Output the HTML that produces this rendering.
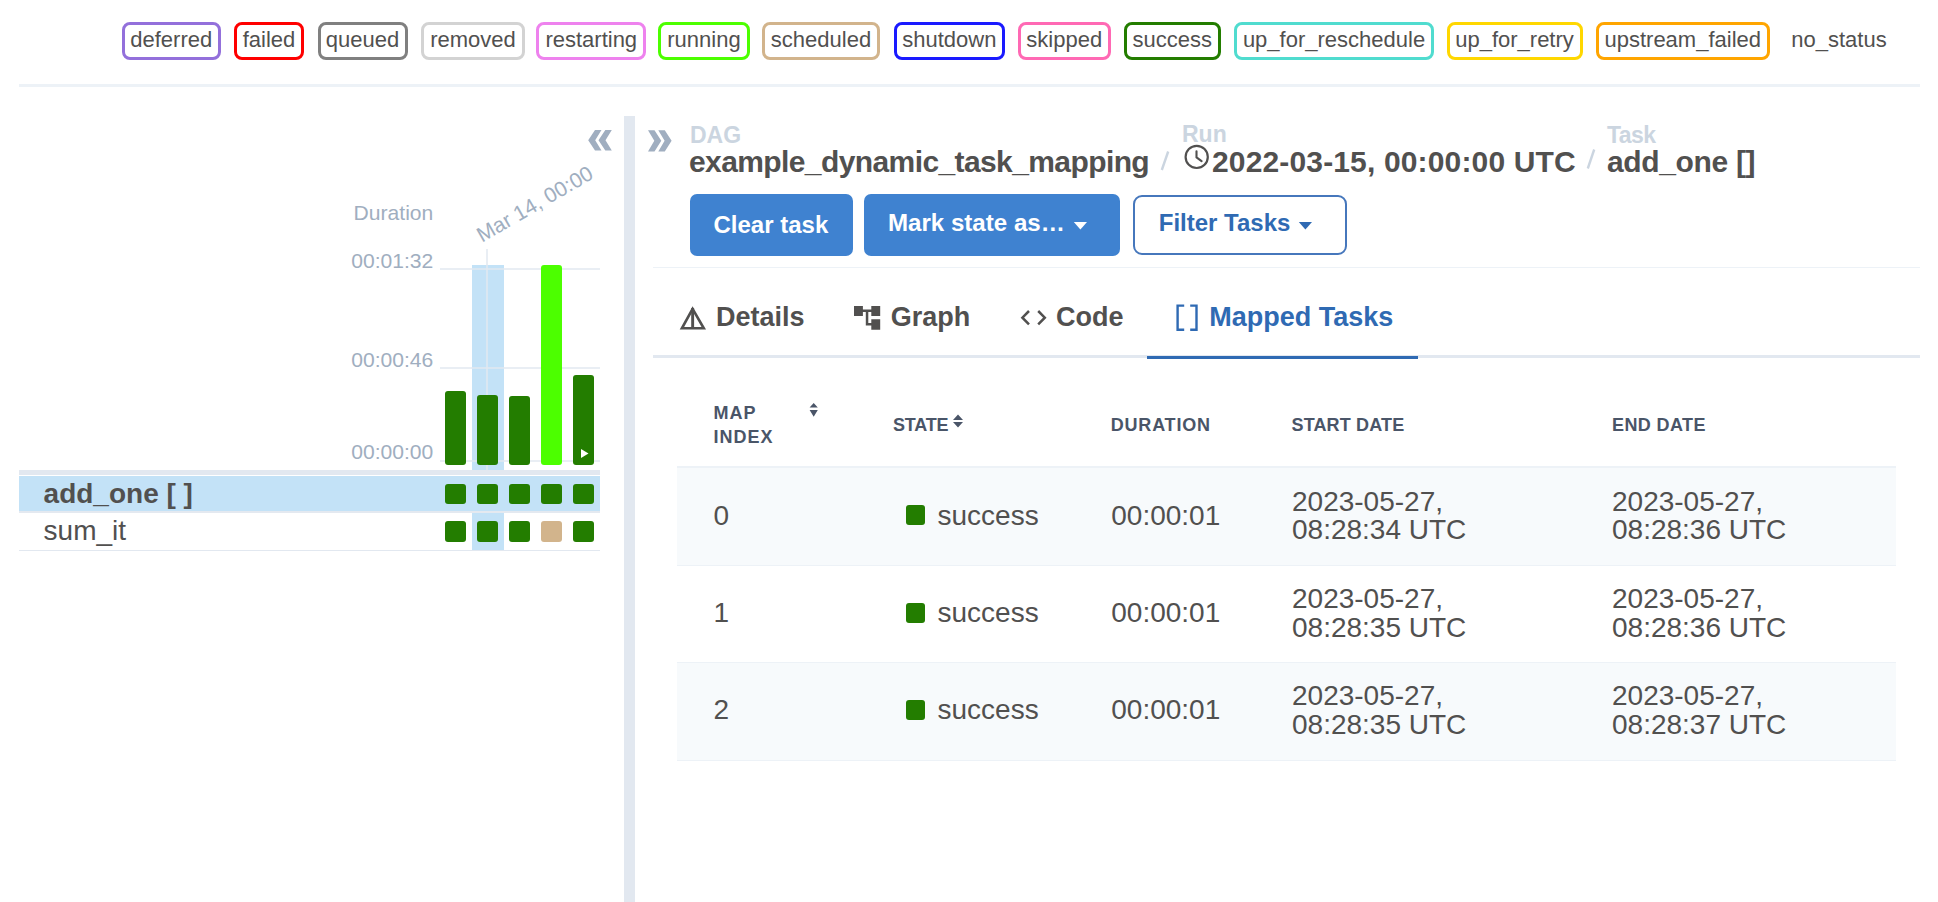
<!DOCTYPE html>
<html><head><meta charset="utf-8"><title>Grid</title>
<style>
html,body{margin:0;padding:0;background:#fff;width:1938px;height:902px;overflow:hidden;position:relative}
body{font-family:"Liberation Sans",sans-serif;color:#51504f}
.t{position:absolute;white-space:pre}
.r{position:absolute;display:block}
.badge{position:absolute;top:21.75px;height:38.5px;box-sizing:border-box;border:3px solid;border-radius:8px;font-size:22px;line-height:30.5px;text-align:center;color:#51504f;white-space:pre}
.btn{position:absolute;background:#3f82d0;border-radius:7px}
</style></head><body>
<div class="badge" style="left:121.75px;width:99.0px;border-color:#9370db">deferred</div>
<div class="badge" style="left:234.25px;width:69.5px;border-color:#ff0000">failed</div>
<div class="badge" style="left:317.5px;width:90.0px;border-color:#808080">queued</div>
<div class="badge" style="left:421px;width:104px;border-color:#d3d3d3">removed</div>
<div class="badge" style="left:536.25px;width:110.0px;border-color:#ee82ee">restarting</div>
<div class="badge" style="left:658px;width:92px;border-color:#4cff00">running</div>
<div class="badge" style="left:762px;width:118px;border-color:#d2b48c">scheduled</div>
<div class="badge" style="left:893.75px;width:111.25px;border-color:#1a1aff">shutdown</div>
<div class="badge" style="left:1017.5px;width:93.5px;border-color:#ff69b4">skipped</div>
<div class="badge" style="left:1124px;width:96.5px;border-color:#237d00">success</div>
<div class="badge" style="left:1234px;width:200px;border-color:#50dccf">up_for_reschedule</div>
<div class="badge" style="left:1446.5px;width:136.0px;border-color:#ffd700">up_for_retry</div>
<div class="badge" style="left:1595.5px;width:174.5px;border-color:#ffa500">upstream_failed</div>
<div class="t" style="left:1791.30px;top:29.17px;font-size:22px;line-height:22px;font-weight:400;color:#51504f;">no_status</div>
<div class="r" style="left:19.00px;top:84.00px;width:1901.00px;height:3.00px;background:#edf2f7;"></div>
<svg class="r" style="left:586px;top:129px" width="27" height="23" viewBox="0 0 27 23"><path d="M9 1 H15.5 L9.2 11.3 L15.5 21.6 H9 L2.2 11.3 Z M19.3 1 H25.8 L19.5 11.3 L25.8 21.6 H19.3 L12.5 11.3 Z" fill="#a0aec0"/></svg>
<div class="t" style="right:1504.70px;top:202.13px;font-size:21.1px;line-height:21.1px;font-weight:400;color:#a0aec0;text-align:right">Duration</div>
<div class="t" style="right:1504.70px;top:250.13px;font-size:21.1px;line-height:21.1px;font-weight:400;color:#a0aec0;text-align:right">00:01:32</div>
<div class="t" style="right:1504.70px;top:349.13px;font-size:21.1px;line-height:21.1px;font-weight:400;color:#a0aec0;text-align:right">00:00:46</div>
<div class="t" style="right:1504.70px;top:441.13px;font-size:21.1px;line-height:21.1px;font-weight:400;color:#a0aec0;text-align:right">00:00:00</div>
<div class="r" style="left:472.00px;top:265.00px;width:32.00px;height:205.00px;background:#c3e2f7;"></div>
<div class="r" style="left:440.00px;top:268.00px;width:160.00px;height:2.00px;background:rgba(226,232,240,0.75);"></div>
<div class="r" style="left:440.00px;top:367.00px;width:160.00px;height:2.00px;background:rgba(226,232,240,0.75);"></div>
<div class="r" style="left:440.00px;top:460.00px;width:160.00px;height:2.00px;background:rgba(226,232,240,0.75);"></div>
<div class="r" style="left:486.00px;top:249.00px;width:2.00px;height:221.00px;background:rgba(226,232,240,0.75);"></div>
<div class="r" style="left:444.60px;top:391.30px;width:21.00px;height:73.70px;background:#237d00;border-radius:3px"></div>
<div class="r" style="left:477.00px;top:394.50px;width:21.00px;height:70.50px;background:#237d00;border-radius:3px"></div>
<div class="r" style="left:509.00px;top:396.10px;width:21.00px;height:68.90px;background:#237d00;border-radius:3px"></div>
<div class="r" style="left:540.70px;top:265.00px;width:21.00px;height:200.00px;background:#4cff00;border-radius:3px"></div>
<div class="r" style="left:573.00px;top:375.20px;width:21.00px;height:89.80px;background:#237d00;border-radius:3px"></div>
<svg class="r" style="left:580px;top:448px" width="10" height="11" viewBox="0 0 10 11"><path d="M1 1 L8.5 5.5 L1 10 Z" fill="#fff"/></svg>
<div class="t" style="left:480.8px;top:240.6px;font-size:21.1px;line-height:21.1px;color:#a0aec0;transform-origin:0 0;transform:rotate(-30deg) translateY(-16px)">Mar 14, 00:00</div>
<div class="r" style="left:19.00px;top:470.00px;width:581.00px;height:5.00px;background:#e2e8f0;"></div>
<div class="r" style="left:19.00px;top:476.00px;width:581.00px;height:35.00px;background:#c3e2f7;"></div>
<div class="r" style="left:19.00px;top:511.00px;width:581.00px;height:1.50px;background:#e4e9f0;"></div>
<div class="r" style="left:472.00px;top:513.00px;width:32.00px;height:37.00px;background:#c3e2f7;"></div>
<div class="r" style="left:19.00px;top:550.00px;width:581.00px;height:1.20px;background:#e2e8f0;"></div>
<div class="r" style="left:444.60px;top:484.00px;width:21.00px;height:20.00px;background:#237d00;border-radius:3px"></div>
<div class="r" style="left:477.00px;top:484.00px;width:21.00px;height:20.00px;background:#237d00;border-radius:3px"></div>
<div class="r" style="left:509.00px;top:484.00px;width:21.00px;height:20.00px;background:#237d00;border-radius:3px"></div>
<div class="r" style="left:540.70px;top:484.00px;width:21.00px;height:20.00px;background:#237d00;border-radius:3px"></div>
<div class="r" style="left:573.00px;top:484.00px;width:21.00px;height:20.00px;background:#237d00;border-radius:3px"></div>
<div class="r" style="left:444.60px;top:521.00px;width:21.00px;height:20.50px;background:#237d00;border-radius:3px"></div>
<div class="r" style="left:477.00px;top:521.00px;width:21.00px;height:20.50px;background:#237d00;border-radius:3px"></div>
<div class="r" style="left:509.00px;top:521.00px;width:21.00px;height:20.50px;background:#237d00;border-radius:3px"></div>
<div class="r" style="left:540.70px;top:521.00px;width:21.00px;height:20.50px;background:#d2b48c;border-radius:3px"></div>
<div class="r" style="left:573.00px;top:521.00px;width:21.00px;height:20.50px;background:#237d00;border-radius:3px"></div>
<div class="t" style="left:43.60px;top:479.59px;font-size:28px;line-height:28px;font-weight:700;color:#51504f;">add_one [ ]</div>
<div class="t" style="left:43.60px;top:516.69px;font-size:28px;line-height:28px;font-weight:400;color:#51504f;">sum_it</div>
<div class="r" style="left:624.00px;top:116.00px;width:11.00px;height:786.00px;background:#e2e8f0;"></div>
<svg class="r" style="left:646px;top:129px" width="27" height="24" viewBox="0 0 27 24"><path d="M2 1.2 H8.5 L15.3 11.8 L8.5 22.6 H2 L8.3 11.8 Z M12.3 1.2 H18.8 L25.6 11.8 L18.8 22.6 H12.3 L18.6 11.8 Z" fill="#a0aec0"/></svg>
<div class="t" style="left:690.00px;top:123.73px;font-size:23px;line-height:23px;font-weight:700;color:#cbd5e0;">DAG</div>
<div class="t" style="left:689.00px;top:146.60px;font-size:30px;line-height:30px;font-weight:700;color:#51504f;letter-spacing:-0.6px">example_dynamic_task_mapping</div>
<svg class="r" style="left:1155px;top:145px" width="20" height="32" viewBox="1155 145 20 32"><path d="M1168.2 151.5 L1161.8 170" stroke="#cbd5e0" stroke-width="2.4"/></svg>
<div class="t" style="left:1182.00px;top:123.28px;font-size:23px;line-height:23px;font-weight:700;color:#cbd5e0;">Run</div>
<svg class="r" style="left:1184px;top:143px" width="27" height="28" viewBox="0 -1 27 28"><circle cx="12.7" cy="12.9" r="11.1" fill="none" stroke="#51504f" stroke-width="2.2"/><path d="M12.5 7.2 V13.4 L17.6 17.1" fill="none" stroke="#51504f" stroke-width="2.1" stroke-linecap="round" stroke-linejoin="round"/></svg>
<div class="t" style="left:1212.00px;top:147.10px;font-size:30px;line-height:30px;font-weight:700;color:#51504f;letter-spacing:0.15px">2022-03-15, 00:00:00 UTC</div>
<svg class="r" style="left:1581px;top:143px" width="20" height="32" viewBox="1581 143 20 32"><path d="M1594.2 149.5 L1587.8 168.5" stroke="#cbd5e0" stroke-width="2.4"/></svg>
<div class="t" style="left:1607.00px;top:123.93px;font-size:23px;line-height:23px;font-weight:700;color:#cbd5e0;letter-spacing:-0.6px">Task</div>
<div class="t" style="left:1607.00px;top:147.10px;font-size:30px;line-height:30px;font-weight:700;color:#51504f;letter-spacing:-0.35px">add_one []</div>
<div class="btn" style="left:689.5px;top:194px;width:163.5px;height:61.5px"></div>
<div class="t" style="left:713.50px;top:212.68px;font-size:24px;line-height:24px;font-weight:700;color:#fff;">Clear task</div>
<div class="btn" style="left:864px;top:194px;width:256px;height:61.5px"></div>
<div class="t" style="left:888.00px;top:211.34px;font-size:24.1px;line-height:24.1px;font-weight:700;color:#fff;">Mark state as…</div>
<svg class="r" style="left:1073px;top:221px" width="15" height="10" viewBox="0 0 15 10"><path d="M0.8 1 H14 L7.4 8.5 Z" fill="#fff"/></svg>
<div class="r" style="left:1133px;top:195px;width:214px;height:60px;box-sizing:border-box;border:2px solid #4677bc;border-radius:9px"></div>
<div class="t" style="left:1158.75px;top:211.08px;font-size:24px;line-height:24px;font-weight:700;color:#2f6ab3;">Filter Tasks</div>
<svg class="r" style="left:1298px;top:221px" width="15" height="10" viewBox="0 0 15 10"><path d="M0.8 1 H14 L7.4 8.5 Z" fill="#2f6ab3"/></svg>
<div class="r" style="left:653.00px;top:266.80px;width:1267.00px;height:1.40px;background:#edf2f7;"></div>
<svg class="r" style="left:675px;top:300px" width="36" height="34" viewBox="675 300 36 34"><path d="M692.6 308.8 L681.9 328.3 H703.8 Z" fill="none" stroke="#51504f" stroke-width="2.6" stroke-linejoin="miter"/><rect x="691.2" y="308" width="2.9" height="20" fill="#51504f"/></svg>
<div class="t" style="left:716.00px;top:303.64px;font-size:27px;line-height:27px;font-weight:700;color:#51504f;">Details</div>
<svg class="r" style="left:848px;top:300px" width="40" height="35" viewBox="848 300 40 35"><path fill="#51504f" d="M854 306 H862.9 V316.1 H854 Z M871.3 306 H880.2 V316.1 H871.3 Z M871.3 319.2 H880.2 V329.7 H871.3 Z M862.5 309.6 H871.7 V312 H862.5 Z M865.8 309.6 H868.3 V325.6 H865.8 Z M865.8 322.9 H871.7 V325.5 H865.8 Z"/></svg>
<div class="t" style="left:890.75px;top:303.64px;font-size:27px;line-height:27px;font-weight:700;color:#51504f;">Graph</div>
<svg class="r" style="left:1015px;top:300px" width="40" height="35" viewBox="1015 300 40 35"><path d="M1029 311 L1022.4 317.7 L1029 324.4 M1038.2 311 L1044.8 317.7 L1038.2 324.4" fill="none" stroke="#51504f" stroke-width="2.5" stroke-linecap="butt"/></svg>
<div class="t" style="left:1056.00px;top:303.64px;font-size:27px;line-height:27px;font-weight:700;color:#51504f;">Code</div>
<svg class="r" style="left:1170px;top:300px" width="40" height="35" viewBox="1170 300 40 35"><path d="M1184.2 305.6 H1177.6 V329.8 H1184.2 M1190.2 305.6 H1196.5 V329.8 H1190.2" fill="none" stroke="#2f6ab3" stroke-width="2.4"/></svg>
<div class="t" style="left:1209.25px;top:303.64px;font-size:27px;line-height:27px;font-weight:700;color:#2f6ab3;">Mapped Tasks</div>
<div class="r" style="left:653.00px;top:355.00px;width:1267.00px;height:3.00px;background:#e2e8f0;"></div>
<div class="r" style="left:1147.00px;top:355.50px;width:271.00px;height:3.50px;background:#2f6ab3;"></div>
<div class="t" style="left:713.50px;top:403.76px;font-size:18px;line-height:18px;font-weight:700;color:#4a5568;letter-spacing:1px">MAP</div>
<div class="t" style="left:713.50px;top:427.76px;font-size:18px;line-height:18px;font-weight:700;color:#4a5568;letter-spacing:1px">INDEX</div>
<svg class="r" style="left:805px;top:400px" width="16" height="20" viewBox="805 400 16 20"><path d="M813.7 402.9 L817.8 407.6 H809.6 Z M809.6 410.1 H817.8 L813.7 416.8 Z" fill="#4a5568"/></svg>
<div class="t" style="left:893.00px;top:415.76px;font-size:18px;line-height:18px;font-weight:700;color:#4a5568;letter-spacing:-0.2px">STATE</div>
<svg class="r" style="left:950px;top:410px" width="16" height="20" viewBox="950 410 16 20"><path d="M958 414.5 L963 420 H953 Z M953 422 H963 L958 427.5 Z" fill="#4a5568"/></svg>
<div class="t" style="left:1110.75px;top:415.76px;font-size:18px;line-height:18px;font-weight:700;color:#4a5568;letter-spacing:0.8px">DURATION</div>
<div class="t" style="left:1291.50px;top:415.76px;font-size:18px;line-height:18px;font-weight:700;color:#4a5568;letter-spacing:0.15px">START DATE</div>
<div class="t" style="left:1612.00px;top:415.76px;font-size:18px;line-height:18px;font-weight:700;color:#4a5568;letter-spacing:0.4px">END DATE</div>
<div class="r" style="left:677.00px;top:466.50px;width:1219.00px;height:98.50px;background:#f7fafc;"></div>
<div class="r" style="left:677.00px;top:466.00px;width:1219.00px;height:1.50px;background:#edf2f7;"></div>
<div class="r" style="left:677.00px;top:565.00px;width:1219.00px;height:97.00px;background:#ffffff;"></div>
<div class="r" style="left:677.00px;top:564.50px;width:1219.00px;height:1.50px;background:#edf2f7;"></div>
<div class="r" style="left:677.00px;top:662.00px;width:1219.00px;height:98.00px;background:#f7fafc;"></div>
<div class="r" style="left:677.00px;top:661.50px;width:1219.00px;height:1.50px;background:#edf2f7;"></div>
<div class="r" style="left:677.00px;top:759.50px;width:1219.00px;height:1.50px;background:#edf2f7;"></div>
<div class="t" style="left:713.50px;top:501.54px;font-size:28px;line-height:28px;font-weight:400;color:#51504f;">0</div>
<div class="r" style="left:905.75px;top:504.90px;width:19.50px;height:20.50px;background:#237d00;border-radius:3px"></div>
<div class="t" style="left:937.50px;top:501.54px;font-size:28px;line-height:28px;font-weight:400;color:#51504f;">success</div>
<div class="t" style="left:1111.25px;top:501.54px;font-size:28px;line-height:28px;font-weight:400;color:#51504f;">00:00:01</div>
<div class="t" style="left:1292.00px;top:487.54px;font-size:28px;line-height:28px;font-weight:400;color:#51504f;">2023-05-27,</div>
<div class="t" style="left:1292.00px;top:516.29px;font-size:28px;line-height:28px;font-weight:400;color:#51504f;">08:28:34 UTC</div>
<div class="t" style="left:1612.00px;top:487.54px;font-size:28px;line-height:28px;font-weight:400;color:#51504f;">2023-05-27,</div>
<div class="t" style="left:1612.00px;top:516.29px;font-size:28px;line-height:28px;font-weight:400;color:#51504f;">08:28:36 UTC</div>
<div class="t" style="left:713.50px;top:599.34px;font-size:28px;line-height:28px;font-weight:400;color:#51504f;">1</div>
<div class="r" style="left:905.75px;top:602.70px;width:19.50px;height:20.50px;background:#237d00;border-radius:3px"></div>
<div class="t" style="left:937.50px;top:599.34px;font-size:28px;line-height:28px;font-weight:400;color:#51504f;">success</div>
<div class="t" style="left:1111.25px;top:599.34px;font-size:28px;line-height:28px;font-weight:400;color:#51504f;">00:00:01</div>
<div class="t" style="left:1292.00px;top:585.34px;font-size:28px;line-height:28px;font-weight:400;color:#51504f;">2023-05-27,</div>
<div class="t" style="left:1292.00px;top:614.09px;font-size:28px;line-height:28px;font-weight:400;color:#51504f;">08:28:35 UTC</div>
<div class="t" style="left:1612.00px;top:585.34px;font-size:28px;line-height:28px;font-weight:400;color:#51504f;">2023-05-27,</div>
<div class="t" style="left:1612.00px;top:614.09px;font-size:28px;line-height:28px;font-weight:400;color:#51504f;">08:28:36 UTC</div>
<div class="t" style="left:713.50px;top:696.29px;font-size:28px;line-height:28px;font-weight:400;color:#51504f;">2</div>
<div class="r" style="left:905.75px;top:699.65px;width:19.50px;height:20.50px;background:#237d00;border-radius:3px"></div>
<div class="t" style="left:937.50px;top:696.29px;font-size:28px;line-height:28px;font-weight:400;color:#51504f;">success</div>
<div class="t" style="left:1111.25px;top:696.29px;font-size:28px;line-height:28px;font-weight:400;color:#51504f;">00:00:01</div>
<div class="t" style="left:1292.00px;top:682.29px;font-size:28px;line-height:28px;font-weight:400;color:#51504f;">2023-05-27,</div>
<div class="t" style="left:1292.00px;top:711.04px;font-size:28px;line-height:28px;font-weight:400;color:#51504f;">08:28:35 UTC</div>
<div class="t" style="left:1612.00px;top:682.29px;font-size:28px;line-height:28px;font-weight:400;color:#51504f;">2023-05-27,</div>
<div class="t" style="left:1612.00px;top:711.04px;font-size:28px;line-height:28px;font-weight:400;color:#51504f;">08:28:37 UTC</div>
<div class="r" style="left:677.00px;top:759.50px;width:1219.00px;height:1.50px;background:#edf2f7;"></div>
</body></html>
